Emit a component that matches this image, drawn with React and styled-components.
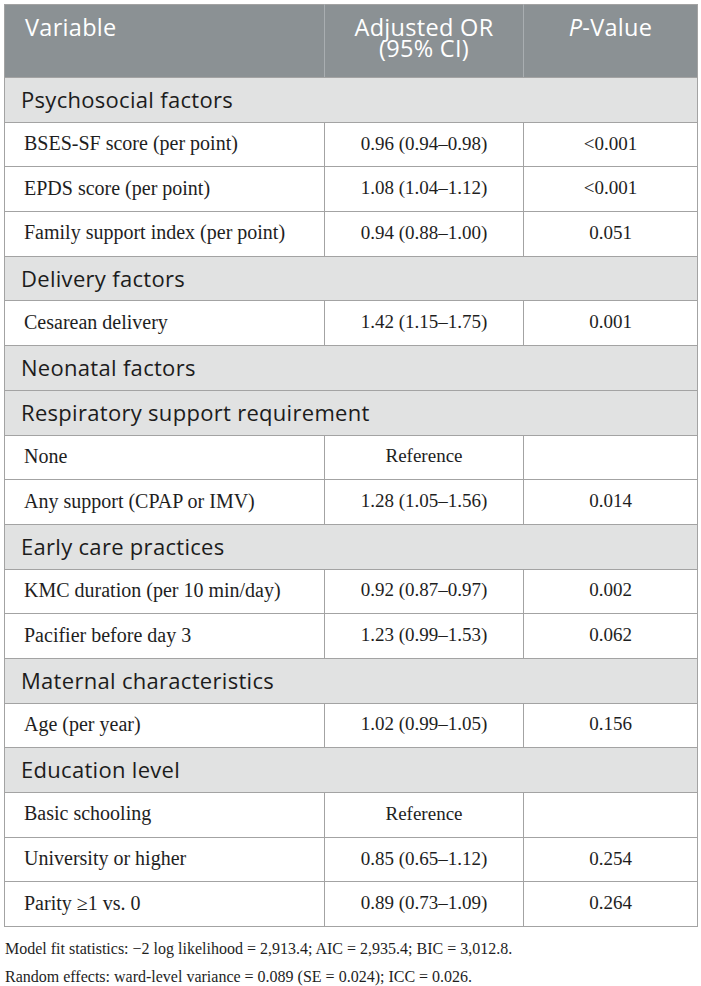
import React from "react";
import styled, { createGlobalStyle } from "styled-components";

const GlobalStyle = createGlobalStyle`
  body {
    margin: 0;
    background: #ffffff;
  }
`;

const rows = [
  { section: "Psychosocial factors" },
  { label: "BSES-SF score (per point)", or: "0.96 (0.94–0.98)", p: "<0.001" },
  { label: "EPDS score (per point)", or: "1.08 (1.04–1.12)", p: "<0.001" },
  { label: "Family support index (per point)", or: "0.94 (0.88–1.00)", p: "0.051" },
  { section: "Delivery factors" },
  { label: "Cesarean delivery", or: "1.42 (1.15–1.75)", p: "0.001" },
  { section: "Neonatal factors" },
  { section: "Respiratory support requirement" },
  { label: "None", or: "Reference", p: "" },
  { label: "Any support (CPAP or IMV)", or: "1.28 (1.05–1.56)", p: "0.014" },
  { section: "Early care practices" },
  { label: "KMC duration (per 10 min/day)", or: "0.92 (0.87–0.97)", p: "0.002" },
  { label: "Pacifier before day 3", or: "1.23 (0.99–1.53)", p: "0.062" },
  { section: "Maternal characteristics" },
  { label: "Age (per year)", or: "1.02 (0.99–1.05)", p: "0.156" },
  { section: "Education level" },
  { label: "Basic schooling", or: "Reference", p: "" },
  { label: "University or higher", or: "0.85 (0.65–1.12)", p: "0.254" },
  { label: "Parity ≥1 vs. 0", or: "0.89 (0.73–1.09)", p: "0.264" },
];

const Page = styled.div`
  padding: 4px 4px 0 4px;
`;

const Table = styled.table`
  width: 693px;
  border-collapse: collapse;
  border: 1px solid #a3a3a3;
  table-layout: fixed;
`;

const HeadCell = styled.th`
  height: 73px;
  box-sizing: border-box;
  background: #8b9194;
  color: #ffffff;
  font-family: "Open Sans", "Noto Sans", sans-serif;
  font-weight: 400;
  font-size: 23.5px;
  letter-spacing: 0.3px;
  line-height: 21px;
  vertical-align: top;
  padding: 12px 0 0 ${(p) => (p.$left ? "20px" : "0")};
  text-align: ${(p) => (p.$left ? "left" : "center")};
  border-left: 1px solid #a9aeb1;
  border-bottom: 1px solid #a3a3a3;
  &:first-child {
    border-left: none;
  }
  i {
    font-style: italic;
  }
`;

const SectionCell = styled.td`
  height: 44.7px;
  box-sizing: border-box;
  background: #e1e2e2;
  color: #1c1c1c;
  font-family: "Open Sans", "Noto Sans", sans-serif;
  font-size: 22px;
  letter-spacing: 0.3px;
  padding: 0 0 2px 16px;
  border: 1px solid #a3a3a3;
  vertical-align: middle;
`;

const Cell = styled.td`
  height: 44.7px;
  box-sizing: border-box;
  background: #ffffff;
  color: #1e1e1e;
  font-family: "Liberation Serif", "Times New Roman", serif;
  font-size: ${(p) => (p.$center ? "19px" : "20px")};
  padding: 0 0 2px ${(p) => (p.$center ? "0" : "19px")};
  text-align: ${(p) => (p.$center ? "center" : "left")};
  border: 1px solid #a3a3a3;
  vertical-align: middle;
  white-space: nowrap;
`;

const Notes = styled.div`
  padding: 8px 0 0 1px;
  font-family: "Liberation Serif", "Times New Roman", serif;
  font-size: 16px;
  line-height: 28px;
  color: #1e1e1e;
`;

export default function App() {
  return (
    <>
      <GlobalStyle />
      <Page>
        <Table>
          <colgroup>
            <col style={{ width: 320 }} />
            <col style={{ width: 199 }} />
            <col style={{ width: 174 }} />
          </colgroup>
          <thead>
            <tr>
              <HeadCell $left>Variable</HeadCell>
              <HeadCell>
                Adjusted OR
                <br />
                (95% CI)
              </HeadCell>
              <HeadCell>
                <i>P</i>-Value
              </HeadCell>
            </tr>
          </thead>
          <tbody>
            {rows.map((r, i) =>
              r.section ? (
                <tr key={i}>
                  <SectionCell colSpan={3}>{r.section}</SectionCell>
                </tr>
              ) : (
                <tr key={i}>
                  <Cell>{r.label}</Cell>
                  <Cell $center>{r.or}</Cell>
                  <Cell $center>{r.p}</Cell>
                </tr>
              )
            )}
          </tbody>
        </Table>
        <Notes>
          Model fit statistics: −2 log likelihood = 2,913.4; AIC = 2,935.4; BIC = 3,012.8.
          <br />
          Random effects: ward-level variance = 0.089 (SE = 0.024); ICC = 0.026.
        </Notes>
      </Page>
    </>
  );
}
